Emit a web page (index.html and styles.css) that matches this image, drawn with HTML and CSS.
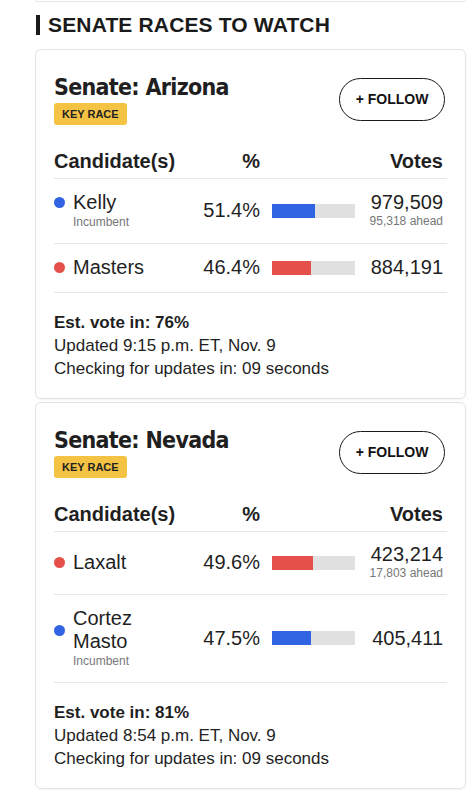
FILE: index.html
```html
<!DOCTYPE html>
<html lang="en">
<head>
<meta charset="utf-8">
<title>Senate races to watch</title>
<link rel="stylesheet" href="styles.css">
</head>
<body>
<div class="page">
  <div class="prev-card"></div>
  <h2 class="section-title"><span class="section-bar"></span>SENATE RACES TO WATCH</h2>

  <section class="race-card">
    <div class="race-head">
      <div class="race-title-wrap">
        <h3 class="race-title">Senate: Arizona</h3>
        <span class="key-race">KEY RACE</span>
      </div>
      <button class="follow">+ FOLLOW</button>
    </div>
    <div class="results">
      <div class="row head-row">
        <div class="head-name">Candidate(s)</div>
        <div class="pct">%</div>
        <div></div>
        <div class="votes">Votes</div>
      </div>
      <div class="row">
        <div class="cand">
          <span class="dot dem"></span>
          <span class="cand-name">Kelly</span>
          <span class="cand-sub">Incumbent</span>
        </div>
        <div class="pct">51.4%</div>
        <div class="track"><div class="fill dem" style="width:51.4%"></div></div>
        <div class="votes"><div class="votes-num">979,509</div><div class="votes-sub">95,318 ahead</div></div>
      </div>
      <div class="row">
        <div class="cand">
          <span class="dot rep"></span>
          <span class="cand-name">Masters</span>
        </div>
        <div class="pct">46.4%</div>
        <div class="track"><div class="fill rep" style="width:46.4%"></div></div>
        <div class="votes"><div class="votes-num">884,191</div></div>
      </div>
    </div>
    <div class="race-foot">
      <p class="est">Est. vote in: 76%</p>
      <p>Updated 9:15 p.m. ET, Nov. 9</p>
      <p>Checking for updates in: 09 seconds</p>
    </div>
  </section>

  <section class="race-card">
    <div class="race-head">
      <div class="race-title-wrap">
        <h3 class="race-title">Senate: Nevada</h3>
        <span class="key-race">KEY RACE</span>
      </div>
      <button class="follow">+ FOLLOW</button>
    </div>
    <div class="results">
      <div class="row head-row">
        <div class="head-name">Candidate(s)</div>
        <div class="pct">%</div>
        <div></div>
        <div class="votes">Votes</div>
      </div>
      <div class="row">
        <div class="cand">
          <span class="dot rep"></span>
          <span class="cand-name">Laxalt</span>
        </div>
        <div class="pct">49.6%</div>
        <div class="track"><div class="fill rep" style="width:49.6%"></div></div>
        <div class="votes"><div class="votes-num">423,214</div><div class="votes-sub">17,803 ahead</div></div>
      </div>
      <div class="row">
        <div class="cand">
          <span class="dot dem"></span>
          <span class="cand-name">Cortez Masto</span>
          <span class="cand-sub">Incumbent</span>
        </div>
        <div class="pct">47.5%</div>
        <div class="track"><div class="fill dem" style="width:47.5%"></div></div>
        <div class="votes"><div class="votes-num">405,411</div></div>
      </div>
    </div>
    <div class="race-foot">
      <p class="est">Est. vote in: 81%</p>
      <p>Updated 8:54 p.m. ET, Nov. 9</p>
      <p>Checking for updates in: 09 seconds</p>
    </div>
  </section>
</div>
</body>
</html>
```

FILE: styles.css
```css
* { box-sizing: border-box; }

html, body {
  margin: 0;
  padding: 0;
  background: #fff;
}

body {
  font-family: "Liberation Sans", Arial, sans-serif;
  color: #1f1f1f;
}

.page {
  padding: 0 8px 0 35px;
}

.prev-card {
  height: 2px;
  border: 1px solid #e6e6e6;
  border-top: none;
  border-radius: 0 0 6px 6px;
}

.section-title {
  display: flex;
  align-items: center;
  gap: 8px;
  margin: 11px 0 12px 1px;
  font-size: 21px;
  line-height: 24px;
  font-weight: 700;
  letter-spacing: 0.15px;
  color: #1a1a1a;
}

.section-bar {
  display: block;
  width: 4px;
  height: 20px;
  background: #1a1a1a;
}

.race-card {
  border: 1px solid #e3e3e3;
  border-radius: 6px;
  padding: 23px 18px 18px;
  margin-bottom: 3px;
  box-shadow: 0 1px 2px rgba(0, 0, 0, 0.05);
}

.race-head {
  display: flex;
  align-items: center;
  justify-content: space-between;
}

.race-title-wrap {
  display: flex;
  flex-direction: column;
  align-items: flex-start;
}

.race-title {
  margin: 0;
  font-family: "DejaVu Sans Condensed", "DejaVu Sans", sans-serif;
  font-stretch: condensed;
  font-size: 23px;
  line-height: 28px;
  font-weight: 700;
  letter-spacing: -0.7px;
  color: #1f1f1f;
}

.key-race {
  margin-top: 2px;
  height: 22px;
  padding: 0 8px;
  display: flex;
  align-items: center;
  background: #f5c344;
  border-radius: 3px;
  font-size: 11px;
  font-weight: 700;
  color: #222;
}

.follow {
  margin-right: 2px;
  width: 106px;
  height: 43px;
  border: 1.5px solid #1a1a1a;
  border-radius: 22px;
  background: #fff;
  font-family: "Liberation Sans", Arial, sans-serif;
  font-size: 14px;
  font-weight: 700;
  color: #111;
  padding: 0;
}

.results {
  margin-top: 25px;
}

.row {
  display: grid;
  grid-template-columns: 110px 84px 83px 1fr;
  column-gap: 12px;
  align-items: center;
  padding: 12px 0 13px;
  border-bottom: 1px solid #e6e6e6;
}

.head-row {
  padding: 0 0 5px;
  font-size: 20px;
  line-height: 23px;
  font-weight: 700;
}

.head-name {
  white-space: nowrap;
}

.cand {
  display: grid;
  grid-template-columns: 11px 1fr;
  column-gap: 8px;
  align-items: center;
}

.dot {
  width: 11px;
  height: 11px;
  border-radius: 50%;
}

.cand-name {
  font-size: 20px;
  line-height: 23px;
}

.cand-sub {
  grid-column: 2;
  font-size: 12px;
  line-height: 16px;
  color: #777;
}

.pct {
  text-align: right;
  font-size: 20px;
  line-height: 23px;
}

.track {
  height: 14px;
  background: #e1e1e1;
}

.fill {
  height: 100%;
}

.dem { background: #3064e3; }
.rep { background: #e5514a; }

.votes {
  text-align: right;
  padding-right: 4px;
}

.votes-num {
  font-size: 20px;
  line-height: 21px;
}

.votes-sub {
  font-size: 12px;
  line-height: 16px;
  color: #777;
}

.race-foot {
  margin-top: 18px;
}

.race-foot p {
  margin: 0;
  font-size: 17px;
  line-height: 23px;
}

.race-foot .est {
  font-weight: 700;
}
```
